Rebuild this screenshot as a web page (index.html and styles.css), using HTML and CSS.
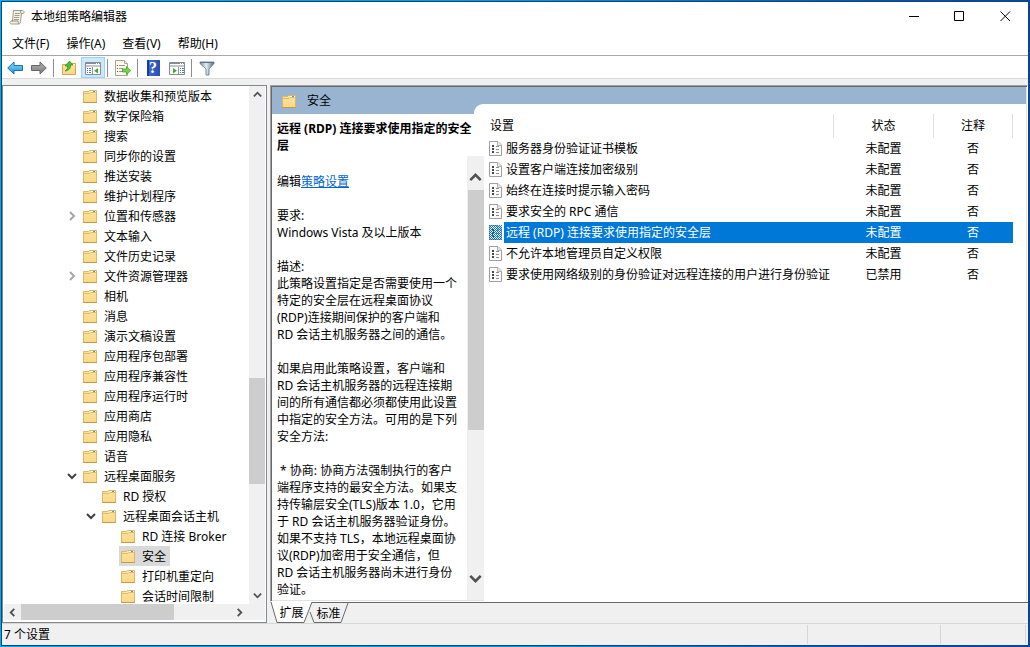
FILE: index.html
```html
<!DOCTYPE html>
<html lang="zh-CN">
<head>
    <meta charset="UTF-8">
    <meta name="viewport" content="width=device-width, initial-scale=1.0">
    <title>本地组策略编辑器</title>
    <link rel="stylesheet" href="styles.css">
</head>
<body>
    <!-- shared icons -->
    <svg class="defs" width="0" height="0">
        <defs>
            <linearGradient id="folderFill" x1="0" y1="0" x2="0" y2="1">
                <stop offset="0" stop-color="#fbe3a0"/>
                <stop offset="1" stop-color="#fbd885"/>
            </linearGradient>
            <linearGradient id="blueFill" x1="0" y1="0" x2="0" y2="1">
                <stop offset="0" stop-color="#8fdcff"/>
                <stop offset="1" stop-color="#1593e0"/>
            </linearGradient>
            <linearGradient id="greyFill" x1="0" y1="0" x2="0" y2="1">
                <stop offset="0" stop-color="#b0b0b0"/>
                <stop offset="1" stop-color="#7c7c7c"/>
            </linearGradient>
            <linearGradient id="funnelFill" x1="0" y1="0" x2="1" y2="0">
                <stop offset="0" stop-color="#8095a8"/>
                <stop offset=".45" stop-color="#e4edf4"/>
                <stop offset="1" stop-color="#4f687f"/>
            </linearGradient>
            <pattern id="dither" width="2" height="2" patternUnits="userSpaceOnUse">
                <rect width="1" height="1" fill="#0078d7"/>
                <rect x="1" y="1" width="1" height="1" fill="#0078d7"/>
            </pattern>
        </defs>
        <symbol id="folder" viewBox="0 0 15 14">
            <path d="M.5 13.5V2.500h5l1-1h7v12z" fill="url(#folderFill)" stroke="#dcb765"/>
            <path d="M8 2.500h5" stroke="#fff"/>
            <path d="M10 2.500h2" stroke="#4d9bd6"/>
            <path d="M1 4.500h6l1-1h5" fill="none" stroke="#d9b25e" stroke-width=".8"/>
            <path d="M0 13.500h14" stroke="#c39a48"/>
        </symbol>
        <symbol id="policy" viewBox="0 0 13 15">
            <path d="M.5.5h8.500l3.500 3.500v10.500H.5z" fill="#fbfbfb" stroke="#a0a0a0"/>
            <path d="M8.500.5v4h4" fill="#e6e6e6" stroke="#b0b0b0"/>
            <path d="M3 4h2v2H3zM3 7h2v2H3zM3 10h2v2H3z" fill="#3c4654"/>
            <path d="M7 5.500h3M7 8.500h3M7 11.500h3" stroke="#8d8d8d"/>
        </symbol>
        <symbol id="right" viewBox="0 0 10 10"><path d="M3 1l4 4-4 4" fill="none" stroke="currentColor" stroke-width="2"/></symbol>
        <symbol id="left" viewBox="0 0 10 10"><path d="M7 1L3 5l4 4" fill="none" stroke="currentColor" stroke-width="2"/></symbol>
        <symbol id="down" viewBox="0 0 10 10"><path d="M1 3l4 4 4-4" fill="none" stroke="currentColor" stroke-width="2"/></symbol>
        <symbol id="up" viewBox="0 0 10 10"><path d="M1 7l4-4 4 4" fill="none" stroke="currentColor" stroke-width="2"/></symbol>
    </svg>

    <div class="window">
        <header class="titlebar">
            <svg class="app-icon" width="16" height="16" viewBox="0 0 16 16">
                <path d="M4.500 1.500h9c2 0 2 3 .5 3h-1.500l-1 8c0 2-1 2.500-2 2.500h-7c-2 0-2-3 0-3h1z" fill="#f7f1dc" stroke="#a39b88"/>
                <path d="M12.500 4.500c-1.500 0-1-2.500 0-3M2.500 12H9c.5 0 0 3 1 3" fill="none" stroke="#8f8878"/>
                <path d="M6 4.500h5M5.500 6.500h5M5 8.500h5M5 10.500h5" stroke="#9a9cab"/>
            </svg>
            <h1>本地组策略编辑器</h1>
            <div class="window-buttons">
                <button type="button" aria-label="最小化"><svg width="11" height="11"><path d="M1 5.500h10" stroke="#000"/></svg></button>
                <button type="button" aria-label="最大化"><svg width="11" height="11"><path d="M.5.5h9v9h-9z" fill="none" stroke="#000"/></svg></button>
                <button type="button" aria-label="关闭"><svg width="11" height="11"><path d="M.5.5l9.500 9.500M10 .5L.5 10" stroke="#000"/></svg></button>
            </div>
        </header>

        <nav class="menu">
            <button type="button">文件(F)</button>
            <button type="button">操作(A)</button>
            <button type="button">查看(V)</button>
            <button type="button">帮助(H)</button>
        </nav>

        <div class="toolbar">
            <button type="button" aria-label="后退">
                <svg width="16" height="16" viewBox="0 0 16 16"><path d="M.7 8L7 2v3.500h8.500v5H7V14z" fill="url(#blueFill)" stroke="#1b6fae"/></svg>
            </button>
            <button type="button" aria-label="前进">
                <svg width="16" height="16" viewBox="0 0 16 16"><path d="M15.300 8L9 2v3.500H.5v5H9V14z" fill="url(#greyFill)" stroke="#666"/></svg>
            </button>
            <span class="separator"></span>
            <button type="button" aria-label="上移一级">
                <svg width="16" height="16" viewBox="0 0 16 16">
                    <path d="M1.500 14.500v-10h5l1-1h7v11z" fill="url(#folderFill)" stroke="#cfa95a"/>
                    <path d="M10 4.500h4" stroke="#fff"/>
                    <path d="M4 11c2-1.500 3-3 2.500-5H4l4.500-5L12 5H9.500c.5 3-1.500 5.500-5.500 6z" fill="#4cc22e" stroke="#2b8a1a" stroke-width=".7"/>
                </svg>
            </button>
            <button type="button" class="active" aria-label="显示/隐藏控制台树">
                <svg width="16" height="16" viewBox="0 0 16 16">
                    <path d="M.5 2.500h15v12H.5z" fill="#fff" stroke="#858c94"/>
                    <path d="M1 3.500h14" stroke="#858c94"/><path d="M11 3.500h3" stroke="#fff" stroke-dasharray="1 1"/>
                    <path d="M1 6h14" stroke="#c3c8ce" stroke-width="2"/><path d="M7.500 7v7" stroke="#8d959e"/>
                    <path d="M2 8.500h1m1 0h2M2 10.500h1m1 0h2M2 12.500h1m1 0h2" stroke="#4f7eae"/>
                    <path d="M13 8v5.500l-4-2.700z" fill="#42aa30"/>
                </svg>
            </button>
            <span class="separator"></span>
            <button type="button" aria-label="导出列表">
                <svg width="16" height="16" viewBox="0 0 16 16">
                    <path d="M.5.5h9l3 3v12H.5z" fill="#fffbe4" stroke="#a8a491"/>
                    <path d="M9.500.5v3h3" fill="#eee" stroke="#aaa"/>
                    <path d="M2 5.500h1M2 8.500h1M2 11.500h1" stroke="#555"/>
                    <path d="M4 5.500h6M4 8.500h4M4 11.500h4" stroke="#8f96a8"/>
                    <path d="M7.500 9h4V6.500l4.300 4-4.300 4V12h-4z" fill="#6ed64c" stroke="#3d9928" stroke-width=".7"/>
                </svg>
            </button>
            <span class="separator"></span>
            <button type="button" class="help" aria-label="帮助"><span>?</span></button>
            <button type="button" aria-label="显示/隐藏操作窗格">
                <svg width="16" height="16" viewBox="0 0 16 16">
                    <path d="M.5 2.500h15v12H.5z" fill="#fff" stroke="#858c94"/>
                    <path d="M1 3.500h14" stroke="#858c94"/><path d="M11 3.500h3" stroke="#fff" stroke-dasharray="1 1"/>
                    <path d="M1 6h14" stroke="#c3c8ce" stroke-width="2"/><path d="M9.500 7v7" stroke="#8d959e"/>
                    <path d="M11 8.500h1m1 0h2M11 10.500h1m1 0h2M11 12.500h1m1 0h2" stroke="#4f7eae"/>
                    <path d="M4 8v5.500l4-2.700z" fill="#42aa30"/>
                </svg>
            </button>
            <span class="separator"></span>
            <button type="button" aria-label="筛选器">
                <svg width="16" height="16" viewBox="0 0 16 16">
                    <path d="M1 2h14v1.500L10 9v6H7V9L1 3.500z" fill="url(#funnelFill)" stroke="#5d7184" stroke-width=".8"/>
                    <path d="M1 2.500h14" stroke="#5d7184"/>
                </svg>
            </button>
        </div>

        <main class="content">
            <section class="tree">
                <div class="tree-main">
                    <ul class="tree-list">
                        <li><span class="node"><svg class="folder"><use href="#folder"/></svg>数据收集和预览版本</span></li>
                        <li><span class="node"><svg class="folder"><use href="#folder"/></svg>数字保险箱</span></li>
                        <li><span class="node"><svg class="folder"><use href="#folder"/></svg>搜索</span></li>
                        <li><span class="node"><svg class="folder"><use href="#folder"/></svg>同步你的设置</span></li>
                        <li><span class="node"><svg class="folder"><use href="#folder"/></svg>推送安装</span></li>
                        <li><span class="node"><svg class="folder"><use href="#folder"/></svg>维护计划程序</span></li>
                        <li><svg class="chevron closed"><use href="#right"/></svg><span class="node"><svg class="folder"><use href="#folder"/></svg>位置和传感器</span></li>
                        <li><span class="node"><svg class="folder"><use href="#folder"/></svg>文本输入</span></li>
                        <li><span class="node"><svg class="folder"><use href="#folder"/></svg>文件历史记录</span></li>
                        <li><svg class="chevron closed"><use href="#right"/></svg><span class="node"><svg class="folder"><use href="#folder"/></svg>文件资源管理器</span></li>
                        <li><span class="node"><svg class="folder"><use href="#folder"/></svg>相机</span></li>
                        <li><span class="node"><svg class="folder"><use href="#folder"/></svg>消息</span></li>
                        <li><span class="node"><svg class="folder"><use href="#folder"/></svg>演示文稿设置</span></li>
                        <li><span class="node"><svg class="folder"><use href="#folder"/></svg>应用程序包部署</span></li>
                        <li><span class="node"><svg class="folder"><use href="#folder"/></svg>应用程序兼容性</span></li>
                        <li><span class="node"><svg class="folder"><use href="#folder"/></svg>应用程序运行时</span></li>
                        <li><span class="node"><svg class="folder"><use href="#folder"/></svg>应用商店</span></li>
                        <li><span class="node"><svg class="folder"><use href="#folder"/></svg>应用隐私</span></li>
                        <li><span class="node"><svg class="folder"><use href="#folder"/></svg>语音</span></li>
                        <li><svg class="chevron"><use href="#down"/></svg><span class="node"><svg class="folder"><use href="#folder"/></svg>远程桌面服务</span></li>
                        <li class="level-1"><span class="node"><svg class="folder"><use href="#folder"/></svg>RD 授权</span></li>
                        <li class="level-1"><svg class="chevron"><use href="#down"/></svg><span class="node"><svg class="folder"><use href="#folder"/></svg>远程桌面会话主机</span></li>
                        <li class="level-2"><span class="node"><svg class="folder"><use href="#folder"/></svg>RD 连接 Broker</span></li>
                        <li class="level-2"><span class="node selected"><svg class="folder"><use href="#folder"/></svg>安全</span></li>
                        <li class="level-2"><span class="node"><svg class="folder"><use href="#folder"/></svg>打印机重定向</span></li>
                        <li class="level-2"><span class="node"><svg class="folder"><use href="#folder"/></svg>会话时间限制</span></li>
                    </ul>
                    <div class="scrollbar vertical">
                        <button type="button" aria-label="向上滚动"><svg><use href="#up"/></svg></button>
                        <div class="track"><span style="flex-grow: 275"></span><span class="thumb" style="flex-grow: 106"></span><span style="flex-grow: 103"></span></div>
                        <button type="button" aria-label="向下滚动"><svg><use href="#down"/></svg></button>
                    </div>
                </div>
                <div class="scrollbar horizontal">
                    <button type="button" aria-label="向左滚动"><svg><use href="#left"/></svg></button>
                    <div class="track"><span class="thumb" style="flex-grow: 153"></span><span style="flex-grow: 57"></span></div>
                    <button type="button" aria-label="向右滚动"><svg><use href="#right"/></svg></button>
                </div>
            </section>

            <section class="result">
                <div class="pane">
                    <div class="pane-header"><svg class="folder"><use href="#folder"/></svg><h2>安全</h2></div>
                    <div class="pane-body">
                        <article class="details">
                            <h3>远程 (RDP) 连接要求使用指定的安全层</h3>
                            <div class="details-body">
                                <div class="details-text">
                                    <p>编辑<a href="#">策略设置</a></p>
                                    <p>要求:<br>Windows Vista 及以上版本</p>
                                    <p>描述:<br>此策略设置指定是否需要使用一个<br>特定的安全层在远程桌面协议<br>(RDP)连接期间保护的客户端和<br>RD 会话主机服务器之间的通信。</p>
                                    <p>如果启用此策略设置，客户端和<br>RD 会话主机服务器的远程连接期<br>间的所有通信都必须都使用此设置<br>中指定的安全方法。可用的是下列<br>安全方法:</p>
                                    <p>&nbsp;* 协商: 协商方法强制执行的客户<br>端程序支持的最安全方法。如果支<br>持传输层安全(TLS)版本 1.0，它用<br>于 RD 会话主机服务器验证身份。<br>如果不支持 TLS，本地远程桌面协<br>议(RDP)加密用于安全通信，但<br>RD 会话主机服务器尚未进行身份<br>验证。</p>
                                </div>
                                <div class="scrollbar vertical large">
                                    <button type="button" aria-label="向上滚动"><svg><use href="#up"/></svg></button>
                                    <div class="track"><span class="thumb" style="flex-grow: 240"></span><span style="flex-grow: 136"></span></div>
                                    <button type="button" aria-label="向下滚动"><svg><use href="#down"/></svg></button>
                                </div>
                            </div>
                        </article>
                        <div class="list">
                            <table>
                                <thead>
                                    <tr><th class="name"><span>设置</span></th><th class="state"><span>状态</span></th><th class="comment"><span>注释</span></th></tr>
                                </thead>
                                <tbody>
                                    <tr><td><div class="cell"><svg class="policy"><use href="#policy"/></svg><span>服务器身份验证证书模板</span></div></td><td>未配置</td><td>否</td></tr>
                                    <tr><td><div class="cell"><svg class="policy"><use href="#policy"/></svg><span>设置客户端连接加密级别</span></div></td><td>未配置</td><td>否</td></tr>
                                    <tr><td><div class="cell"><svg class="policy"><use href="#policy"/></svg><span>始终在连接时提示输入密码</span></div></td><td>未配置</td><td>否</td></tr>
                                    <tr><td><div class="cell"><svg class="policy"><use href="#policy"/></svg><span>要求安全的 RPC 通信</span></div></td><td>未配置</td><td>否</td></tr>
                                    <tr class="selected"><td><div class="cell"><svg class="policy"><use href="#policy"/><rect width="13" height="15" fill="url(#dither)"/></svg><span>远程 (RDP) 连接要求使用指定的安全层</span></div></td><td>未配置</td><td>否</td></tr>
                                    <tr><td><div class="cell"><svg class="policy"><use href="#policy"/></svg><span>不允许本地管理员自定义权限</span></div></td><td>未配置</td><td>否</td></tr>
                                    <tr><td><div class="cell"><svg class="policy"><use href="#policy"/></svg><span>要求使用网络级别的身份验证对远程连接的用户进行身份验证</span></div></td><td>已禁用</td><td>否</td></tr>
                                </tbody>
                            </table>
                        </div>
                    </div>
                </div>
                <div class="tabs">
                    <button type="button" class="tab active">
                        <svg width="43" height="21"><path d="M1 0l6 20.500h27L42 0z" fill="#fff"/><path d="M1 0l6 20.500h27L42 0" fill="none" stroke="#696969"/></svg>
                        <span>扩展</span>
                    </button>
                    <button type="button" class="tab">
                        <svg width="43" height="20"><path d="M3 9l4 10.500h27L41 0" fill="none" stroke="#696969"/></svg>
                        <span>标准</span>
                    </button>
                    <span class="tabs-line"></span>
                </div>
            </section>
        </main>

        <footer class="status">
            <span class="status-text">7 个设置</span>
            <span class="status-part wide"></span>
            <span class="status-part"></span>
        </footer>
    </div>
</body>
</html>
```

FILE: styles.css
```css
* {
    margin: 0;
    padding: 0;
    box-sizing: border-box;
}

body {
    height: 100vh;
    padding: 1px;
    background: linear-gradient(90deg, #00adef 0%, #009be5 50%, #0050c8 85%, #0046b4 100%);
    font-family: "Noto Sans", "Noto Sans CJK SC", sans-serif;
    font-size: 12px;
    line-height: 17px;
    color: #000;
}

button {
    border: none;
    background: none;
    font: inherit;
    color: inherit;
}

svg {
    display: block;
    flex: none;
}

h1, h2, h3 {
    font-size: 12px;
    font-weight: normal;
}

ul {
    list-style: none;
}

.defs {
    position: absolute;
}

.window {
    height: 100%;
    display: flex;
    flex-direction: column;
    border: 1px solid #16436b;
    background: #f0f0f0;
}

/* Title bar and menu */
.titlebar {
    display: flex;
    align-items: center;
    height: 29px;
    padding-left: 7px;
    gap: 6px;
    background: #fff;
}

.titlebar h1 {
    flex: 1;
}

.window-buttons {
    display: flex;
    height: 100%;
}

.window-buttons button {
    width: 46px;
    display: flex;
    align-items: center;
    justify-content: center;
}

.menu {
    display: flex;
    align-items: center;
    gap: 1px;
    height: 24px;
    padding-left: 2px;
    background: #fff;
}

.menu button {
    padding: 0 8px;
}

/* Toolbar */
.toolbar {
    display: flex;
    align-items: center;
    height: 24px;
    padding: 1px 0 0 1px;
    background: #fff;
    border-top: 1px solid #a8a8a8;
    border-bottom: 1px solid #dadada;
}

.toolbar button {
    display: flex;
    align-items: center;
    justify-content: center;
    width: 24px;
    height: 21px;
    border: 1px solid transparent;
}

.toolbar .active {
    background: #cce8ff;
    border-color: #99d1ff;
}

.separator {
    width: 1px;
    height: 18px;
    margin: 0 3px 0 2px;
    background: #8d8d8d;
}

.help span {
    width: 13px;
    height: 16px;
    background: linear-gradient(90deg, #1c3a92 0, #1c3a92 2px, #3f69cf 2px, #2a4db2 100%);
    color: #fff;
    font-family: "Liberation Serif", serif;
    font-size: 16px;
    font-weight: bold;
    line-height: 16px;
}

/* Main area */
.content {
    flex: 1;
    min-height: 0;
    display: flex;
    gap: 3px;
    padding-top: 6px;
}

.tree {
    width: 265px;
    flex: none;
    display: flex;
    flex-direction: column;
    padding: 0 1px 2px;
    border: 1px solid #828790;
    background: #fff;
}

.tree-main {
    flex: 1;
    min-height: 0;
    display: flex;
}

.tree-list {
    flex: 1;
    overflow: hidden;
}

.tree-list li {
    display: flex;
    align-items: center;
    justify-content: flex-start;
    height: 20px;
    padding-left: 63px;
}

.tree-list .level-1 {
    padding-left: 82px;
}

.tree-list .level-2 {
    padding-left: 101px;
}

.chevron {
    width: 10px;
    height: 10px;
    margin-right: 4px;
    color: #404040;
}

.chevron.closed {
    color: #a6a6a6;
}

.node {
    display: flex;
    align-items: center;
    gap: 6px;
    height: 20px;
    padding: 0 4px 0 2px;
    margin-left: 14px;
    white-space: nowrap;
}

.chevron + .node {
    margin-left: 0;
}

.node.selected {
    background: #d9d9d9;
}

.folder {
    width: 15px;
    height: 14px;
}

/* Scrollbars */
.scrollbar {
    flex: none;
    display: flex;
    background: #f0f0f0;
    color: #505050;
}

.scrollbar button {
    display: flex;
    align-items: center;
    justify-content: center;
    width: 17px;
    height: 17px;
}

.scrollbar svg {
    width: 9px;
    height: 9px;
}

.track {
    flex: 1;
    display: flex;
}

.thumb {
    background: #cdcdcd;
}

.vertical {
    flex-direction: column;
    width: 16px;
}

.vertical button {
    width: 100%;
}

.vertical .track {
    flex-direction: column;
}

.horizontal {
    height: 16px;
    padding-right: 17px;
}

.horizontal button {
    height: 100%;
}

.large {
    width: 17px;
}

.large button {
    height: 34px;
    padding-top: 8px;
}

.large button:last-child {
    padding: 0 0 10px;
}

.large svg {
    width: 13px;
    height: 13px;
}

.large .track {
    padding-left: 1px;
}

/* Result pane */
.result {
    flex: 1;
    min-width: 0;
    display: flex;
    flex-direction: column;
}

.pane {
    flex: 1;
    min-height: 0;
    display: flex;
    flex-direction: column;
    padding: 1px 1px 0 1px;
    border: 1px solid #a0a0a0;
    border-right-color: #fff;
    border-bottom-color: #fff;
    background: #fff;
    box-shadow: inset 1px 1px #696969, inset -1px -1px #e3e3e3;
}

.pane-header {
    display: flex;
    align-items: center;
    gap: 10px;
    height: 27px;
    padding-left: 10px;
    background: #99b4d1;
}

.pane-body {
    flex: 1;
    min-height: 0;
    display: flex;
}

.details {
    width: 212px;
    flex: none;
    display: flex;
    flex-direction: column;
    padding: 6px 0 1px 5px;
}

.details h3 {
    font-weight: bold;
    padding-right: 4px;
}

.details-body {
    flex: 1;
    min-height: 0;
    display: flex;
    margin-top: 2px;
}

.details-text {
    flex: 1;
    min-width: 0;
    padding-top: 17px;
    overflow: hidden;
    white-space: nowrap;
}

.details-text p {
    margin-bottom: 17px;
}

.details-text a {
    color: #0066cc;
}

/* The list rises into the blue band with a rounded corner */
.list {
    position: relative;
    flex: 1;
    margin-top: -10px;
    padding: 10px 13px 0 1px;
    background: #fff;
}

.list::before {
    content: "";
    position: absolute;
    top: 0;
    left: -10px;
    width: 10px;
    height: 10px;
    border-top-left-radius: 9px;
    background: #fff;
}

table {
    width: 100%;
    table-layout: fixed;
    border-collapse: collapse;
}

th {
    height: 24px;
    padding-bottom: 2px;
    font-weight: normal;
    text-align: center;
    border-right: 1px solid #e2e2e2;
}

th.name {
    text-align: left;
    padding-left: 5px;
}

.state {
    width: 100px;
}

.comment {
    width: 79px;
}

td {
    height: 21px;
    text-align: center;
    white-space: nowrap;
}

.cell {
    display: flex;
    align-items: center;
    gap: 2px;
    height: 21px;
    padding-left: 4px;
    text-align: left;
}

.cell span {
    flex: 1;
    padding-left: 2px;
    line-height: 21px;
}

.policy {
    width: 13px;
    height: 15px;
}

.selected td {
    color: #fff;
}

.selected .cell span,
.selected td + td {
    background: #0078d7;
}

/* Bottom tabs */
.tabs {
    display: flex;
    height: 21px;
}

.tab {
    position: relative;
    width: 37px;
    height: 21px;
}

.tab svg {
    position: absolute;
    top: 0;
    left: 0;
}

.tab span {
    position: relative;
    padding-left: 6px;
}

.tab.active {
    z-index: 1;
}

.tab:not(.active) {
    border-top: 1px solid #696969;
}

.tabs-line {
    flex: 1;
    border-top: 1px solid #696969;
}

/* Status bar */
.status {
    display: flex;
    height: 22px;
    padding: 1px 2px 1px 2px;
    border-top: 1px solid #d7d7d7;
}

.status-text {
    flex: 1;
    line-height: 20px;
    border-right: 1px solid #d7d7d7;
}

.status-part {
    width: 85px;
    border-right: 1px solid #d7d7d7;
}

.status-part.wide {
    width: 133px;
}
```
